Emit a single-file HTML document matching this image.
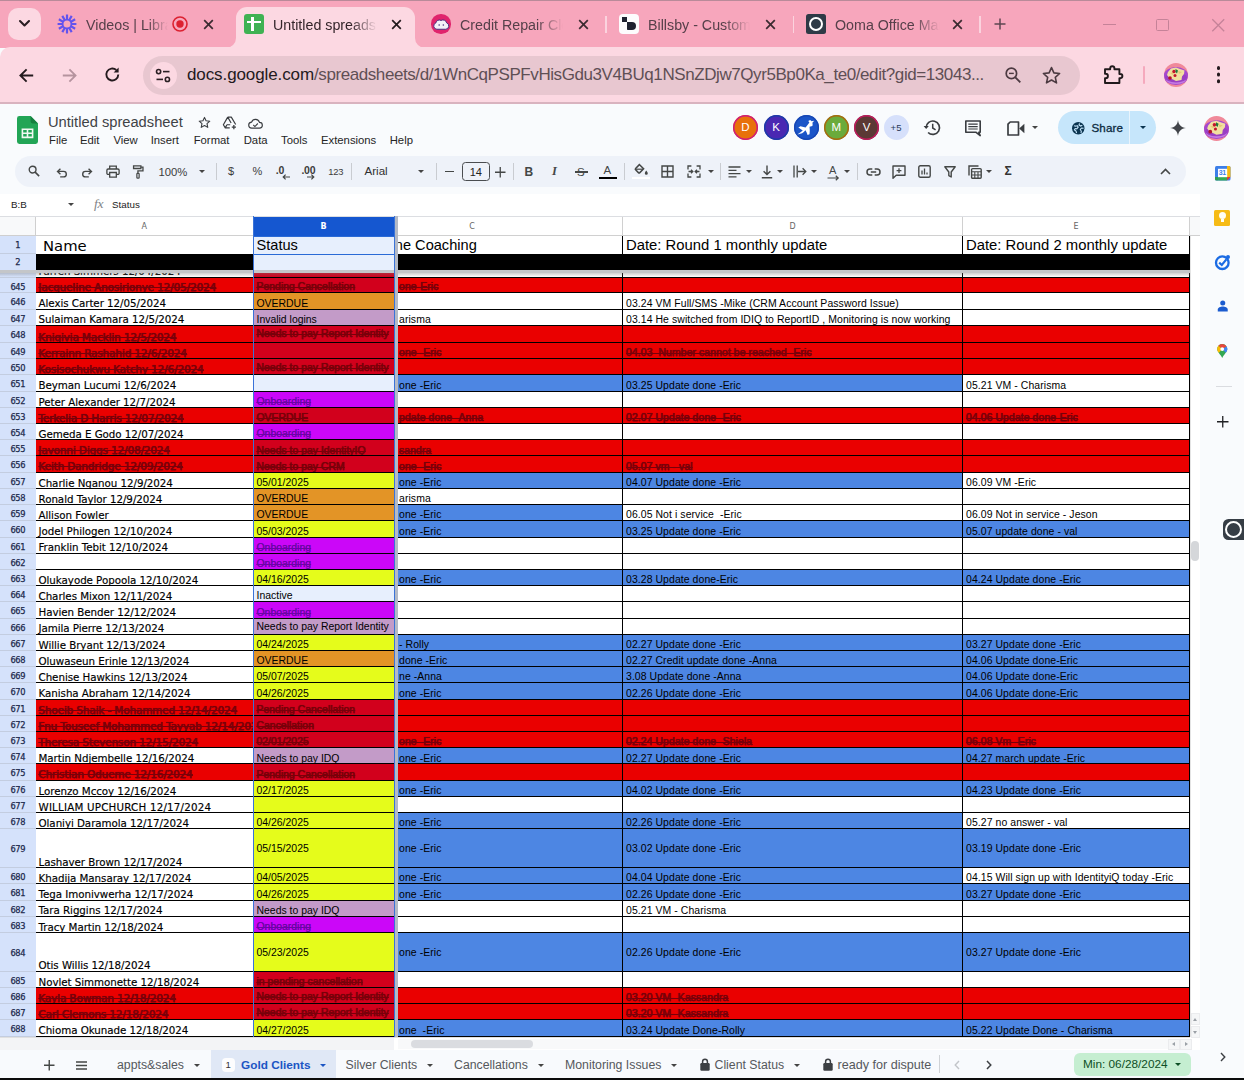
<!DOCTYPE html>
<html><head><meta charset="utf-8"><title>Untitled spreadsheet</title>
<style>
*{box-sizing:border-box;margin:0;padding:0}
html,body{width:1244px;height:1080px;overflow:hidden;background:#f9fbfd;font-family:"Liberation Sans",sans-serif;color:#1f1f1f}
.abs{position:absolute}
#tabstrip{position:absolute;left:0;top:0;width:1244px;height:48px;background:#f7a6bc}
#topline{position:absolute;left:0;top:0;width:1244px;height:1px;background:#b98a99}
#navbar{position:absolute;left:0;top:47px;width:1244px;height:56px;background:#fcd8e2;border-radius:10px 0 0 0}
#navline{position:absolute;left:0;top:102px;width:1244px;height:2px;background:#d9b3bf}
.tabtxt{position:absolute;top:14.5px;font-size:14.25px;color:#56404a;white-space:nowrap;overflow:hidden;height:20px;line-height:20px}
.fade{-webkit-mask-image:linear-gradient(90deg,#000 75%,transparent 100%);mask-image:linear-gradient(90deg,#000 75%,transparent 100%)}
.tsep{position:absolute;top:16px;width:1.5px;height:17px;background:#fbd3de}
svg{position:absolute;overflow:visible}
#pill{position:absolute;left:143px;top:55.5px;width:937px;height:39px;border-radius:20px;background:#e8c7d0}
#url{position:absolute;left:187px;top:64px;font-size:17px;line-height:22px;color:#5f4f55;white-space:nowrap;letter-spacing:-0.42px}
#url b{font-weight:normal;color:#231a1d;letter-spacing:-0.1px}
/* sheets header */
#title{position:absolute;left:48px;top:112px;font-size:14.7px;line-height:20px;color:#3f4246;white-space:nowrap}
.menu{position:absolute;top:133px;font-size:11.3px;line-height:14px;color:#252525;white-space:nowrap}
.av{position:absolute;top:115px;width:25px;height:25px;border-radius:50%;color:#fff;font-size:11.5px;line-height:25px;text-align:center}
#share{position:absolute;left:1058px;top:111px;width:98px;height:33px;border-radius:17px;background:#c6e6fb}
#toolbar{position:absolute;left:15px;top:155.5px;width:1171px;height:31.5px;border-radius:16px;background:#eef2f9}
.tbt{position:absolute;font-size:11px;line-height:14px;color:#3c3c3c;white-space:nowrap}
.tsp{position:absolute;top:163px;width:1px;height:17px;background:#c9ccd1}
.car{position:absolute;width:0;height:0;border-left:3.2px solid transparent;border-right:3.2px solid transparent;border-top:3.6px solid #444}
#fbar{position:absolute;left:0;top:194px;width:1200px;height:22px;background:#fff}
/* grid */
#grid{position:absolute;left:0;top:216px;width:1200px;height:834px;background:#fff;overflow:hidden}
#gridin{position:absolute;left:0;top:-216px;width:1200px;height:1080px}
.c{position:absolute;border-right:1px solid #000;border-bottom:1px solid #000;overflow:hidden;white-space:nowrap;font-size:10.45px;color:#000;display:flex;align-items:flex-end;padding:0 0 1px 3px}
.c span{display:block;line-height:12px}
.nm{font-family:"DejaVu Sans","Liberation Sans",sans-serif;font-size:10.3px;-webkit-text-stroke:.15px currentColor;letter-spacing:-0.05px;padding-left:2.5px;border-right:none}
.nm span{line-height:12px;position:relative;top:1.7px}
.st{border-right:none;padding-left:3px}
.ar span,.st span{position:relative;top:2.1px}
.ar{letter-spacing:.08px}
.rd{color:#78000a;text-shadow:0 0 .8px #78000a;-webkit-text-stroke:.25px #78000a}
.rd span{text-decoration:line-through;text-decoration-thickness:.6px;text-decoration-color:rgba(120,0,10,.65)}
.mg{color:#6b05a6;text-shadow:0 0 .6px #6b05a6}
.mg span{text-decoration:line-through;text-decoration-thickness:.6px;text-decoration-color:rgba(107,5,166,.65)}
.tp{align-items:flex-start}
.tp span{top:2.6px !important}
.cc{padding-left:1px}
.rh{position:absolute;left:0;width:36px;background:#d5e2fb;border-bottom:1px solid #c3cde0;text-align:center;font-size:8.3px;color:#1d2a4d;font-family:"DejaVu Sans","Liberation Sans",sans-serif;letter-spacing:-0.45px;-webkit-text-stroke:.25px #1d2a4d;padding-right:.5px}
.mid{align-items:center;padding-bottom:0}
.mid span{top:1px !important}
.ch{position:absolute;top:216px;height:20px;background:#fff;border-right:1px solid #d0d0d0;border-bottom:1px solid #d0d0d0;text-align:center;font-size:8px;line-height:22.5px;color:#666;font-family:"DejaVu Sans","Liberation Sans",sans-serif}
/* bottom */
#bbar{position:absolute;left:0;top:1050px;width:1200px;height:28px;background:#f8fafd}
.stab{position:absolute;top:1057.5px;font-size:12.3px;line-height:15px;color:#55585c;white-space:nowrap}
#side{position:absolute;left:1200px;top:104px;width:44px;height:974px;background:#f9fbfd}
#black{position:absolute;left:0;top:1078px;width:1244px;height:2px;background:#0b0b0b}
</style></head><body>
<div id="tabstrip"></div>
<div id="topline"></div>
<!-- tab search button -->
<div class="abs" style="left:8px;top:8px;width:33px;height:32px;border-radius:10px;background:#fcd8e2"></div>
<svg style="left:18px;top:19px" width="13" height="9" viewBox="0 0 13 9"><path d="M2 2 L6.5 6.5 L11 2" fill="none" stroke="#2a1d22" stroke-width="2.1" stroke-linecap="round" stroke-linejoin="round"/></svg>
<!-- tab1 -->
<svg style="left:57px;top:14px" width="20" height="20" viewBox="-10 -10 20 20"><path d="M0.00 -4.60L0.00 -9.40M2.30 -3.98L4.70 -8.14M3.98 -2.30L8.14 -4.70M4.60 -0.00L9.40 -0.00M3.98 2.30L8.14 4.70M2.30 3.98L4.70 8.14M0.00 4.60L0.00 9.40M-2.30 3.98L-4.70 8.14M-3.98 2.30L-8.14 4.70M-4.60 0.00L-9.40 0.00M-3.98 -2.30L-8.14 -4.70M-2.30 -3.98L-4.70 -8.14" stroke="#6253ee" stroke-width="2.2" fill="none"/><circle r="4.4" fill="none" stroke="#6253ee" stroke-width="1.8"/></svg>
<div class="tabtxt fade" style="left:86px;width:82px">Videos | Libra</div>
<svg style="left:171px;top:15px" width="18" height="18" viewBox="-9 -9 18 18"><circle r="7" fill="none" stroke="#dc2131" stroke-width="1.6"/><circle r="3.7" fill="#dc2131"/></svg>
<svg class="x" style="left:203px;top:19px" width="11" height="11" viewBox="0 0 11 11"><path d="M1.2 1.2L9.8 9.8M9.8 1.2L1.2 9.8" stroke="#3b2a30" stroke-width="1.7"/></svg>
<!-- active tab -->
<div class="abs" style="left:236px;top:7px;width:179px;height:41px;border-radius:11px 11px 0 0;background:#fcd8e2"></div>
<svg style="left:226px;top:38px" width="10" height="10" viewBox="0 0 10 10"><path d="M10 0V10H0A10 10 0 0 0 10 0Z" fill="#fcd8e2"/></svg>
<svg style="left:415px;top:38px" width="10" height="10" viewBox="0 0 10 10"><path d="M0 0V10H10A10 10 0 0 1 0 0Z" fill="#fcd8e2"/></svg>
<div class="abs" style="left:244px;top:14px;width:19.5px;height:19.5px;border-radius:3px;background:#3fb253"></div>
<div class="abs" style="left:251px;top:16.5px;width:2.6px;height:14.5px;background:#fff"></div>
<div class="abs" style="left:246.5px;top:20.5px;width:14.5px;height:2.6px;background:#fff"></div>
<div class="tabtxt fade" style="left:273px;width:104px;color:#33252a">Untitled spreadsheet</div>
<svg class="x" style="left:390.5px;top:19px" width="11" height="11" viewBox="0 0 11 11"><path d="M1.2 1.2L9.8 9.8M9.8 1.2L1.2 9.8" stroke="#231a1d" stroke-width="1.7"/></svg>
<!-- tab3 -->
<div class="abs" style="left:431px;top:14px;width:19.5px;height:19.5px;border-radius:50%;background:#e0246c"></div>
<svg style="left:432.6px;top:17.6px" width="16.5" height="12.2" viewBox="0 0 15 11"><path d="M3.5 10.2A3 3 0 0 1 2.6 4.4A3.2 3.2 0 0 1 7.3 2.2A3.4 3.4 0 0 1 12.4 4.4A3 3 0 0 1 11.5 10.2Z" fill="#f3f1f8" stroke="#4a2f7e" stroke-width=".9"/><circle cx="5.6" cy="6.3" r=".7" fill="#4a2f7e"/><circle cx="9.4" cy="6.3" r=".7" fill="#4a2f7e"/></svg>
<div class="tabtxt fade" style="left:460px;width:103px">Credit Repair Cloud</div>
<svg class="x" style="left:578px;top:19px" width="11" height="11" viewBox="0 0 11 11"><path d="M1.2 1.2L9.8 9.8M9.8 1.2L1.2 9.8" stroke="#3b2a30" stroke-width="1.7"/></svg>
<div class="tsep" style="left:605.3px"></div>
<!-- tab4 -->
<div class="abs" style="left:619px;top:14px;width:19.5px;height:19.5px;border-radius:4px;background:#fdfcfd"></div>
<div class="abs" style="left:622px;top:17px;width:4.5px;height:4.5px;background:#1f2230"></div>
<div class="abs" style="left:626.5px;top:21.5px;width:9px;height:8.5px;border-radius:0 5px 5px 1px;background:#1f2230"></div>
<div class="tabtxt fade" style="left:648px;width:102px">Billsby - Customer</div>
<svg class="x" style="left:765px;top:19px" width="11" height="11" viewBox="0 0 11 11"><path d="M1.2 1.2L9.8 9.8M9.8 1.2L1.2 9.8" stroke="#3b2a30" stroke-width="1.7"/></svg>
<div class="tsep" style="left:792.5px"></div>
<!-- tab5 -->
<div class="abs" style="left:806px;top:14px;width:19.5px;height:19.5px;border-radius:2.5px;background:#2e3a46"></div>
<div class="abs" style="left:808.7px;top:16.7px;width:14px;height:14px;border-radius:50%;border:2.1px solid #fff"></div>
<div class="tabtxt fade" style="left:835px;width:105px">Ooma Office Manager</div>
<svg class="x" style="left:952px;top:19px" width="11" height="11" viewBox="0 0 11 11"><path d="M1.2 1.2L9.8 9.8M9.8 1.2L1.2 9.8" stroke="#3b2a30" stroke-width="1.7"/></svg>
<div class="tsep" style="left:979.3px"></div>
<svg style="left:994px;top:18px" width="12" height="12" viewBox="0 0 12 12"><path d="M6 0.5V11.5M0.5 6H11.5" stroke="#5e4650" stroke-width="1.5"/></svg>
<!-- window controls -->
<div class="abs" style="left:1102.5px;top:24px;width:13px;height:1.3px;background:#c58298"></div>
<div class="abs" style="left:1156px;top:18.5px;width:12.5px;height:12.5px;border:1.3px solid #c58298;border-radius:1.5px"></div>
<svg style="left:1211.5px;top:18.5px" width="12.5" height="12.5" viewBox="0 0 12.5 12.5"><path d="M0.3 0.3L12.2 12.2M12.2 0.3L0.3 12.2" stroke="#c58298" stroke-width="1.3"/></svg>
<!-- navbar -->
<div id="navbar"></div>
<div id="navline"></div>
<svg style="left:19px;top:67.5px" width="15" height="15" viewBox="0 0 15 15"><path d="M14.2 7.5H1.6M7.6 1.3L1.4 7.5L7.6 13.7" fill="none" stroke="#241a1e" stroke-width="1.9"/></svg>
<svg style="left:62px;top:67.5px" width="15" height="15" viewBox="0 0 15 15"><path d="M0.8 7.5H13.4M7.4 1.3L13.6 7.5L7.4 13.7" fill="none" stroke="#b5939e" stroke-width="1.8"/></svg>
<svg style="left:104px;top:66px" width="17" height="17" viewBox="0 0 17 17"><path d="M14.3 8.6A6 6 0 1 1 12.3 4" fill="none" stroke="#241a1e" stroke-width="1.9"/><path d="M14.6 1.6V6.6H9.6Z" fill="#241a1e"/></svg>
<div id="pill"></div>
<div class="abs" style="left:149.5px;top:61.5px;width:27.5px;height:27.5px;border-radius:50%;background:#fcd8e2"></div>
<svg style="left:155px;top:67.5px" width="16" height="15" viewBox="0 0 16 15"><g fill="none" stroke="#2b2024" stroke-width="1.6"><circle cx="3.6" cy="3.6" r="2.1"/><path d="M8 3.6H14.5"/><circle cx="12.4" cy="11.4" r="2.1"/><path d="M1.5 11.4H8"/></g></svg>
<div id="url"><b>docs.google.com</b>/spreadsheets/d/1WnCqPSPFvHisGdu3V4BUq1NSnZDjw7Qyr5Bp0Ka_te0/edit?gid=13043...</div>
<svg style="left:1004px;top:66px" width="18" height="18" viewBox="0 0 18 18"><circle cx="7.4" cy="7.4" r="5.2" fill="none" stroke="#4c3a41" stroke-width="1.7"/><path d="M11.3 11.3L16.3 16.3" stroke="#4c3a41" stroke-width="1.9"/><path d="M5 7.4H9.8" stroke="#4c3a41" stroke-width="1.4"/></svg>
<svg style="left:1042px;top:65.5px" width="19" height="18" viewBox="0 0 19 18"><path d="M9.5 1.6L11.9 6.9L17.6 7.5L13.3 11.3L14.5 16.9L9.5 14L4.5 16.9L5.7 11.3L1.4 7.5L7.1 6.9Z" fill="none" stroke="#4c3a41" stroke-width="1.6" stroke-linejoin="round"/></svg>
<svg style="left:1103px;top:64px" width="21" height="21" viewBox="0 0 21 21"><path d="M2 5.2H7.2V4.3A2.1 2.1 0 0 1 11.4 4.3V5.2H16.4V10H17.3A2.1 2.1 0 0 1 17.3 14.2H16.4V19H2V14.3H2.6A2.3 2.3 0 0 0 2.6 9.7H2Z" fill="none" stroke="#211a1c" stroke-width="1.9" stroke-linejoin="round"/></svg>
<div class="abs" style="left:1142.5px;top:66px;width:2px;height:18px;background:#f5a9bd;border-radius:1px"></div>
<!-- avatar -->
<svg style="left:1164.2px;top:62.5px" width="24" height="24" viewBox="0 0 24 24"><defs><clipPath id="avc1164"><circle cx="12" cy="12" r="12"/></clipPath></defs><g clip-path="url(#avc1164)"><rect width="24" height="24" fill="#f0899a"/><ellipse cx="12" cy="13" rx="12.5" ry="9" fill="#a548cf"/><ellipse cx="12" cy="16.5" rx="10" ry="4.5" fill="#c57be2"/><ellipse cx="12" cy="14.5" rx="11" ry="5" fill="#9a3fc4"/><path d="M4 9L7 5.5L12 4.5L16 6L20.5 7.5L20 11L18 13.5L17.5 17L12 18L8 16L5 14.5L3 12Z" fill="#f1dfa0"/><path d="M6 10L10 9L9 12Z M14 8L18 9L15 11Z" fill="#e6c878"/><circle cx="10" cy="8.5" r="1.7" fill="#c4162d"/><circle cx="11" cy="12.5" r="1.5" fill="#c4162d"/><circle cx="6" cy="15" r="1.8" fill="#b3122a"/><path d="M11.5 6L14 7.5L13 10.5L11.5 9Z" fill="#1f7a3c"/></g></svg>
<div class="abs" style="left:1216.5px;top:66.3px;width:3.6px;height:3.6px;border-radius:50%;background:#241a1e;box-shadow:0 6.6px 0 #241a1e,0 13.2px 0 #241a1e"></div>

<div id="side"></div>
<!-- calendar -->
<svg style="left:1214.5px;top:166px" width="15.5" height="14.5" viewBox="0 0 15.500 14.5"><rect x="0" y="0" width="15.5" height="14.5" rx="1.5" fill="#3d7fe8"/><path d="M12 0H14A1.500 1.500 0 0 1 15.500 1.500V11H12Z" fill="#f5b912"/><path d="M0 11H3.500V14.500H1.500A1.500 1.500 0 0 1 0 13Z" fill="#2f9e4f"/><path d="M3.500 11H12V14.500H3.500Z" fill="#35a853"/><path d="M12 11H15.500L12 14.500Z" fill="#e13c30"/><rect x="3" y="2.8" width="9.2" height="8.4" fill="#fff"/></svg>
<div class="abs" style="left:1217.5px;top:169px;width:9.5px;text-align:center;font-size:7px;line-height:8px;color:#3d7fe8;font-weight:bold;letter-spacing:-.4px">31</div>
<!-- keep -->
<div class="abs" style="left:1214.3px;top:209.5px;width:16px;height:16px;border-radius:1.5px;background:#f6bb16"></div>
<div class="abs" style="left:1218.8px;top:212.3px;width:7px;height:7px;border-radius:50%;background:#fffdf4"></div>
<div class="abs" style="left:1220.5px;top:219px;width:3.6px;height:3px;background:#fffdf4"></div>
<!-- tasks -->
<svg style="left:1214px;top:253.5px" width="17" height="17" viewBox="0 0 17 17"><circle cx="8.3" cy="8.7" r="6.3" fill="none" stroke="#1b6be3" stroke-width="2.3"/><path d="M5.200 8.600L7.800 11L12.400 5.4" fill="none" stroke="#1b6be3" stroke-width="2.2"/><circle cx="14" cy="3" r="2" fill="#1b6be3"/></svg>
<!-- contacts -->
<svg style="left:1216.7px;top:299.5px" width="11.5" height="12.3" viewBox="0 0 15 16"><circle cx="7.5" cy="3.8" r="3.3" fill="#1c5ccf"/><path d="M1 15V12.500C1 9.800 4.500 8.600 7.500 8.600S14 9.800 14 12.500V15Z" fill="#1c5ccf"/></svg>
<!-- maps -->
<svg style="left:1217.3px;top:344px" width="10.5" height="14.5" viewBox="0 0 13 18"><path d="M6.500 0A6.300 6.300 0 0 1 12.800 6.300C12.800 10 9 12.500 6.500 17.500C4 12.500 .2 10 .2 6.300A6.300 6.300 0 0 1 6.500 0Z" fill="#34a853"/><path d="M6.500 0A6.300 6.300 0 0 1 12 3.200L6.500 6.300L1.600 2.300A6.300 6.300 0 0 1 6.500 0Z" fill="#e8453c"/><path d="M12 3.200A6.300 6.300 0 0 1 12.800 6.300C12.800 8 12 9.500 10.800 11L6.500 6.300Z" fill="#4285f4"/><path d="M1.600 2.300L6.500 6.300L2.300 11C1 9.500 .2 8 .2 6.300C.2 4.800 .7 3.400 1.600 2.300Z" fill="#fbbc04"/><circle cx="6.5" cy="6.3" r="2.3" fill="#fff"/></svg>
<div class="abs" style="left:1215.5px;top:386px;width:16px;height:1px;background:#dadce0"></div>
<svg style="left:1216.5px;top:416px" width="11.5" height="11.5" viewBox="0 0 11.500 11.5"><path d="M5.750 0V11.500M0 5.750H11.5" stroke="#202124" stroke-width="1.3"/></svg>
<!-- ooma floating -->
<div class="abs" style="left:1223px;top:518.5px;width:30px;height:21.5px;border-radius:5.5px;background:#363d45"></div>
<div class="abs" style="left:1225.2px;top:520.8px;width:17.2px;height:17.2px;border-radius:50%;border:2px solid #fff"></div>
<svg style="left:1219.5px;top:1052px" width="6" height="10" viewBox="0 0 6 10"><path d="M1 1L4.800 5L1 9" fill="none" stroke="#3c3f43" stroke-width="1.4"/></svg>

<!-- logo -->
<svg style="left:16.5px;top:115.5px" width="21" height="28" viewBox="0 0 21 28"><path d="M2.4 0H13.6L21 7.4V25.6A2.4 2.4 0 0 1 18.6 28H2.4A2.4 2.4 0 0 1 0 25.600V2.4A2.400 2.400 0 0 1 2.400 0Z" fill="#22a556"/><path d="M13.600 0L21 7.400H15.400A1.800 1.800 0 0 1 13.600 5.600Z" fill="#15803f"/><path d="M4.600 12.400H16.400V22.200H4.600ZM6.200 14V16.500H9.700V14ZM11.300 14V16.500H14.800V14ZM6.200 18.100V20.600H9.700V18.100ZM11.300 18.100V20.600H14.800V18.100Z" fill="#f1f9f3" fill-rule="evenodd"/></svg>
<div id="title">Untitled spreadsheet</div>
<svg style="left:197.8px;top:116.3px" width="13" height="13" viewBox="0 0 16 16"><path d="M8 1.700L9.900 5.900L14.500 6.400L11.100 9.500L12 14L8 11.700L4 14L4.900 9.500L1.500 6.400L6.100 5.900Z" fill="none" stroke="#3a3d41" stroke-width="1.350" stroke-linejoin="round"/></svg>
<svg style="left:221.5px;top:116px" width="15.5" height="13.7" viewBox="0 0 17 15"><path d="M6.300 1.200H10.200L15 9.300M6.300 1.200L1.500 9.600L3.600 13H8.500M6.300 1.200L10 7.700M5.400 9.600L3.600 13M5.400 9.600H9" fill="none" stroke="#3a3d41" stroke-width="1.300" stroke-linejoin="round"/><path d="M13 9.800V14.400M10.700 12.100H15.300" stroke="#3a3d41" stroke-width="1.400"/></svg>
<svg style="left:247.5px;top:117.5px" width="15.2" height="11" viewBox="0 0 18 13"><path d="M4.600 12A3.600 3.600 0 0 1 4.300 4.800A4.900 4.900 0 0 1 13.600 5.200A3.400 3.400 0 0 1 13.600 12Z" fill="none" stroke="#3a3d41" stroke-width="1.350"/><path d="M6.300 8.300L8.200 10.100L11.600 6.500" fill="none" stroke="#3a3d41" stroke-width="1.300"/></svg>
<div class="menu" style="left:49px">File</div><div class="menu" style="left:80px">Edit</div><div class="menu" style="left:113.5px">View</div><div class="menu" style="left:150.7px">Insert</div><div class="menu" style="left:193.7px">Format</div><div class="menu" style="left:243.7px">Data</div><div class="menu" style="left:281px">Tools</div><div class="menu" style="left:321px">Extensions</div><div class="menu" style="left:389.7px">Help</div>
<!-- avatars -->
<div class="av" style="left:732.8px;background:#e8710a;box-shadow:inset 0 0 0 1.5px #cf1a7c">D</div>
<div class="av" style="left:763.5px;background:#4a28b2;box-shadow:inset 0 0 0 1.5px #1c3ca8">K</div>
<div class="av" style="left:793.5px;background:#1b55c8;box-shadow:inset 0 0 0 1.5px #1747b4"></div>
<svg style="left:796.3px;top:117.8px" width="19.5" height="19.5" viewBox="0 0 15 15"><path d="M1 12.600C2.600 11.800 4 10.800 5.200 9.700L1.800 7.400L3.400 6.300L7.400 7.300C8.400 5.800 9.400 4.600 10.300 3.400L9.400 2.300L10.900 1.500L12 2.500L14 2.200L12.600 3.700C12.900 4.500 12.900 5.300 12.600 6.100L10.400 6.700C10.700 8.700 10.700 10.600 10.400 12.500L8.900 13C8.500 11.700 8 10.500 7.300 9.400C6.500 10.300 5.600 11.100 4.700 11.700Z" fill="#fff"/></svg>
<div class="av" style="left:823.7px;background:#6aab3b;box-shadow:inset 0 0 0 1.5px #a9690f">M</div>
<div class="av" style="left:854.1px;background:#5b3935;box-shadow:inset 0 0 0 1.5px #c01a5d">V</div>
<div class="av" style="left:883.5px;background:#d6e0fb;color:#2a3a58;font-size:9.5px">+5</div>
<!-- history -->
<svg style="left:923px;top:118px" width="19" height="19" viewBox="0 0 19 19"><path d="M3.100 9.700A6.700 6.700 0 1 1 5.100 14.500" fill="none" stroke="#3a3d41" stroke-width="1.700"/><path d="M0.600 7.900H5.800L3.200 11Z" fill="#3a3d41"/><path d="M9.700 5.800V10L12.600 11.800" fill="none" stroke="#3a3d41" stroke-width="1.500"/></svg>
<!-- comment -->
<svg style="left:964px;top:119.5px" width="18" height="17" viewBox="0 0 18 17"><path d="M1.800 1H16.200V12.200H14.800L16.200 15.600L11.800 12.200H1.800Z" fill="none" stroke="#3a3d41" stroke-width="1.600" stroke-linejoin="round"/><path d="M4.300 4.200H13.700M4.300 6.600H13.700M4.300 9H13.700" stroke="#3a3d41" stroke-width="1.200"/></svg>
<!-- video -->
<svg style="left:1007px;top:120.5px" width="18" height="15" viewBox="0 0 18 15"><path d="M3.200 1H11.500V14H1V3.200Z" fill="none" stroke="#3a3d41" stroke-width="1.700" stroke-linejoin="round"/><path d="M12.200 7.500L17.400 2.800V12.200Z" fill="#3a3d41"/></svg>
<div class="car" style="left:1032px;top:125.5px"></div>
<!-- share -->
<div id="share"></div>
<div class="abs" style="left:1129px;top:111px;width:1px;height:33px;background:#e8f4fd"></div>
<svg style="left:1071.5px;top:121.5px" width="12.500" height="12.500" viewBox="0 0 12.500 12.500"><circle cx="6.250" cy="6.250" r="6.200" fill="#0b3450"/><path d="M2 3.800C3 4.200 4.200 4.300 5.300 3.800L6.200 5.200L4.800 6.800L3.200 6.500L2.400 7.800L4 9L4.600 11M7.500 1.400L7 3L8.600 4L10.300 3.200M11.600 6.200L9.600 6L8.300 7.400L9.300 9.300L9 11" fill="none" stroke="#c6e6fb" stroke-width="1.100"/></svg>
<div class="abs" style="left:1091.5px;top:120px;font-size:11.6px;line-height:15px;color:#0b2a40;-webkit-text-stroke:.3px #0b2a40;letter-spacing:.1px">Share</div>
<div class="car" style="left:1139.5px;top:126px;border-top-color:#0b3450"></div>
<!-- gemini -->
<svg style="left:1169.5px;top:120px" width="16" height="16" viewBox="0 0 16 16"><path d="M8 0C8.500 4.800 11.200 7.500 16 8C11.200 8.500 8.500 11.200 8 16C7.500 11.200 4.800 8.500 0 8C4.800 7.500 7.500 4.800 8 0Z" fill="#42454a"/></svg>
<!-- avatar -->
<svg style="left:1203.7px;top:115.5px" width="25" height="25" viewBox="0 0 24 24"><defs><clipPath id="avc1203"><circle cx="12" cy="12" r="12"/></clipPath></defs><g clip-path="url(#avc1203)"><rect width="24" height="24" fill="#f0899a"/><ellipse cx="12" cy="13" rx="12.5" ry="9" fill="#a548cf"/><ellipse cx="12" cy="16.5" rx="10" ry="4.5" fill="#c57be2"/><ellipse cx="12" cy="14.5" rx="11" ry="5" fill="#9a3fc4"/><path d="M4 9L7 5.5L12 4.5L16 6L20.5 7.5L20 11L18 13.5L17.5 17L12 18L8 16L5 14.5L3 12Z" fill="#f1dfa0"/><path d="M6 10L10 9L9 12Z M14 8L18 9L15 11Z" fill="#e6c878"/><circle cx="10" cy="8.5" r="1.7" fill="#c4162d"/><circle cx="11" cy="12.5" r="1.5" fill="#c4162d"/><circle cx="6" cy="15" r="1.8" fill="#b3122a"/><path d="M11.5 6L14 7.5L13 10.5L11.5 9Z" fill="#1f7a3c"/></g></svg>
<!-- toolbar -->
<div id="toolbar"></div>
<svg style="left:28px;top:165.3px" width="12.2" height="12.2" viewBox="0 0 14 14"><circle cx="5.300" cy="5.300" r="3.900" fill="none" stroke="#444746" stroke-width="1.600"/><path d="M8.200 8.200L12.800 12.800" stroke="#444746" stroke-width="1.800"/></svg>
<svg style="left:55.5px;top:166.5px" width="12" height="11" viewBox="0 0 13 12"><path d="M2.200 4.800H8.200A3 3 0 0 1 8.200 10.800H4.500" fill="none" stroke="#444746" stroke-width="1.500"/><path d="M4.800 1.800L1.600 4.800L4.800 7.800" fill="none" stroke="#444746" stroke-width="1.500"/></svg>
<svg style="left:80.8px;top:166.5px" width="12" height="11" viewBox="0 0 13 12"><path d="M10.800 4.800H4.800A3 3 0 0 0 4.800 10.800H8.500" fill="none" stroke="#444746" stroke-width="1.500"/><path d="M8.200 1.800L11.400 4.800L8.200 7.800" fill="none" stroke="#444746" stroke-width="1.500"/></svg>
<svg style="left:105.5px;top:165.3px" width="14" height="13.1" viewBox="0 0 16 15"><path d="M4.200 4.600V1.200H11.800V4.600M4.200 10.800H2.400A1.400 1.400 0 0 1 1 9.400V6A1.400 1.400 0 0 1 2.400 4.600H13.600A1.400 1.400 0 0 1 15 6V9.400A1.400 1.400 0 0 1 13.600 10.800H11.800M4.200 8.600H11.800V13.800H4.200Z" fill="none" stroke="#444746" stroke-width="1.500"/></svg>
<svg style="left:132.3px;top:164.8px" width="12.2" height="14" viewBox="0 0 14 16"><path d="M1.800 1H10.200V4H1.800ZM10.200 2.500H12.600V6.800H6.800V9.600" fill="none" stroke="#444746" stroke-width="1.500"/><rect x="5.600" y="9.600" width="2.600" height="5.400" rx=".8" fill="none" stroke="#444746" stroke-width="1.400"/></svg>
<div class="tbt" style="left:158.5px;top:165px;font-size:11.3px">100%</div>
<div class="car" style="left:198.8px;top:170px"></div>
<div class="tsp" style="left:215.5px"></div>
<div class="tbt" style="left:228px;top:164px;font-size:11px">$</div>
<div class="tbt" style="left:252.5px;top:164px;font-size:11px">%</div>
<div class="tbt" style="left:275.8px;top:162.5px;font-size:10.5px;font-weight:bold;letter-spacing:-.3px">.0</div>
<svg style="left:281.5px;top:174px" width="8" height="6" viewBox="0 0 8 6"><path d="M8 3H1.500M3.600 .6L1.200 3L3.600 5.400" fill="none" stroke="#444746" stroke-width="1.200"/></svg>
<div class="tbt" style="left:301.5px;top:162.5px;font-size:10.5px;font-weight:bold;letter-spacing:-.3px">.00</div>
<svg style="left:307px;top:174px" width="8" height="6" viewBox="0 0 8 6"><path d="M0 3H6.500M4.400 .6L6.800 3L4.400 5.400" fill="none" stroke="#444746" stroke-width="1.200"/></svg>
<div class="tbt" style="left:328.3px;top:165px;font-size:9.4px;letter-spacing:-.2px">123</div>
<div class="tsp" style="left:351px"></div>
<div class="tbt" style="left:364.5px;top:164px;font-size:11.6px;color:#303030">Arial</div>
<div class="car" style="left:417.5px;top:170px"></div>
<div class="tsp" style="left:436px"></div>
<div class="abs" style="left:444.5px;top:171px;width:9.5px;height:1.3px;background:#444746"></div>
<div class="abs" style="left:462px;top:162px;width:27.5px;height:19px;border:1px solid #4a4d50;border-radius:3.5px"></div>
<div class="tbt" style="left:462px;top:165px;width:27.5px;text-align:center;font-size:11px;color:#222">14</div>
<svg style="left:495px;top:166.5px" width="10.500" height="10.500" viewBox="0 0 10.500 10.500"><path d="M5.250 0V10.500M0 5.250H10.500" stroke="#444746" stroke-width="1.3"/></svg>
<div class="tsp" style="left:513px"></div>
<div class="tbt" style="left:524.5px;top:164.5px;font-size:12px;font-weight:bold;color:#444746">B</div>
<div class="tbt" style="left:552px;top:164px;font-size:12.5px;font-style:italic;font-weight:bold;color:#444746;font-family:'Liberation Serif',serif">I</div>
<div class="tbt" style="left:577px;top:164.5px;font-size:11.5px;color:#444746">S</div>
<div class="abs" style="left:574.5px;top:171.3px;width:13px;height:1.3px;background:#444746"></div>
<div class="tbt" style="left:603.5px;top:162.5px;font-size:11.5px;color:#444746">A</div>
<div class="abs" style="left:599px;top:176.5px;width:18px;height:2.5px;background:#000"></div>
<div class="tsp" style="left:624px"></div>
<svg style="left:633.5px;top:162.5px" width="15" height="13" viewBox="0 0 15 13"><path d="M4.800 1L9.600 5.800L5.800 9.600A1 1 0 0 1 4.400 9.600L1.600 6.800A1 1 0 0 1 1.600 5.400L5.600 1.400" fill="none" stroke="#444746" stroke-width="1.500"/><path d="M2 6.200H9" stroke="#444746" stroke-width="1.200"/><path d="M12.200 7.400C13.400 9 13.800 9.700 13.800 10.300A1.500 1.500 0 0 1 10.800 10.300C10.800 9.700 11.200 9 12.200 7.400Z" fill="#444746"/></svg>
<div class="abs" style="left:632px;top:176.5px;width:17.5px;height:2.5px;background:#fff"></div>
<svg style="left:660.5px;top:165px" width="13" height="13" viewBox="0 0 13 13"><path d="M1 1H12V12H1ZM6.500 1V12M1 6.500H12" fill="none" stroke="#444746" stroke-width="1.400"/></svg>
<svg style="left:687px;top:165px" width="14" height="13" viewBox="0 0 14 13"><path d="M4.400 1H1V4.400M9.600 1H13V4.400M4.400 12H1V8.600M9.600 12H13V8.600M1.500 6.500H5.500M12.500 6.500H8.500M4 4.800L5.800 6.500L4 8.200M10 4.800L8.200 6.500L10 8.200" fill="none" stroke="#444746" stroke-width="1.300"/></svg>
<div class="car" style="left:708.2px;top:170px"></div>
<div class="tsp" style="left:720px"></div>
<svg style="left:727.5px;top:165.5px" width="13" height="12" viewBox="0 0 13 12"><path d="M0.500 1H12.500M0.500 4.300H8.500M0.500 7.600H12.500M0.500 10.900H8.500" stroke="#444746" stroke-width="1.300"/></svg>
<div class="car" style="left:745.6px;top:170px"></div>
<svg style="left:761px;top:164.5px" width="12" height="14" viewBox="0 0 12 14"><path d="M6 0.500V9.500M2.600 6.200L6 9.600L9.400 6.200M0.800 12.700H11.200" fill="none" stroke="#444746" stroke-width="1.400"/></svg>
<div class="car" style="left:777.4px;top:170px"></div>
<svg style="left:792.5px;top:165px" width="14" height="13" viewBox="0 0 14 13"><path d="M1 0.500V12.500M4.200 0.500V12.500M5 6.500H12.500M9.600 3.300L12.800 6.500L9.600 9.700" fill="none" stroke="#444746" stroke-width="1.300"/></svg>
<div class="car" style="left:811.2px;top:170px"></div>
<div class="tbt" style="left:829px;top:163px;font-size:11px;color:#444746">A</div>
<svg style="left:827px;top:174.5px" width="13" height="6" viewBox="0 0 13 6"><path d="M0.500 3H11M8.800 .8L11.200 3L8.800 5.200" fill="none" stroke="#444746" stroke-width="1.200"/></svg>
<div class="car" style="left:843.8px;top:170px"></div>
<div class="tsp" style="left:856.5px"></div>
<svg style="left:865.5px;top:167.5px" width="15" height="8" viewBox="0 0 15 8"><path d="M6.300 1H4A3 3 0 0 0 4 7H6.300M8.700 1H11A3 3 0 0 1 11 7H8.700M4.800 4H10.200" fill="none" stroke="#444746" stroke-width="1.500"/></svg>
<svg style="left:892px;top:164.5px" width="14" height="14" viewBox="0 0 14 14"><path d="M1 1H13V10.200H4.200L1 13.200Z" fill="none" stroke="#444746" stroke-width="1.400" stroke-linejoin="round"/><path d="M7 3.200V8M4.600 5.600H9.400" stroke="#444746" stroke-width="1.300"/></svg>
<svg style="left:918px;top:165px" width="13" height="13" viewBox="0 0 13 13"><rect x=".8" y=".8" width="11.400" height="11.400" rx="1.500" fill="none" stroke="#444746" stroke-width="1.400"/><path d="M4 9.500V5.500M6.500 9.500V3.500M9 9.500V7.500" stroke="#444746" stroke-width="1.300"/></svg>
<svg style="left:944px;top:165.5px" width="12" height="12" viewBox="0 0 12 12"><path d="M0.800 0.800H11.200L7.200 6V11L4.800 9.600V6Z" fill="none" stroke="#444746" stroke-width="1.400" stroke-linejoin="round"/></svg>
<svg style="left:968px;top:164.5px" width="14" height="14" viewBox="0 0 14 14"><path d="M1 10.500V1H10.500" fill="none" stroke="#444746" stroke-width="1.400"/><rect x="3.600" y="3.600" width="9.600" height="9.600" rx="1" fill="none" stroke="#444746" stroke-width="1.400"/><path d="M3.600 6.800H13.200M6.800 6.800V13.200M10 6.800V13.200M3.600 10H13.200" stroke="#444746" stroke-width="1.100"/></svg>
<div class="car" style="left:985.5px;top:170px"></div>
<div class="tbt" style="left:1004.5px;top:164px;font-size:12px;font-weight:bold;color:#333">Σ</div>
<svg style="left:1159.5px;top:168px" width="11" height="7" viewBox="0 0 11 7"><path d="M1 6L5.500 1.500L10 6" fill="none" stroke="#444746" stroke-width="1.600"/></svg>
<!-- formula bar -->
<div id="fbar"></div>
<div class="tbt" style="left:11px;top:197.5px;font-size:9.8px;color:#222">B:B</div>
<div class="car" style="left:68px;top:203px;border-left-width:3px;border-right-width:3px;border-top-width:3.4px"></div>
<div class="tbt" style="left:94px;top:196.5px;font-size:13.5px;font-style:italic;color:#808387;font-family:'Liberation Serif',serif;letter-spacing:-.3px">fx</div>
<div class="tbt" style="left:112px;top:197.5px;font-size:9.8px;color:#222">Status</div>

<div id="grid"><div id="gridin">
<div class="rh" style="top:270px;height:7.60px"></div><div class="c nm p644" style="left:36.00px;top:270.00px;width:217.50px;height:7.60px;background:#ffffff;"><span>Farren Simmers 12/04/2024</span></div><div class="c " style="left:253.50px;top:270.00px;width:141.00px;height:7.60px;background:#d2001c;"></div><div class="c " style="left:398.00px;top:270.00px;width:225.00px;height:7.60px;background:#ffffff;"></div><div class="c " style="left:623.00px;top:270.00px;width:340.00px;height:7.60px;background:#ffffff;"></div><div class="c " style="left:963.00px;top:270.00px;width:227.00px;height:7.60px;background:#ffffff;"></div><div class="rh" style="top:277.60px;height:15.80px;line-height:18.00px">645</div><div class="c nm rd" style="left:36.00px;top:277.60px;width:217.50px;height:15.80px;background:#ea0000;"><span>Jacqueline Anosirionye 12/05/2024</span></div><div class="c st rd" style="left:253.50px;top:277.60px;width:141.00px;height:15.80px;background:#d2001c;"><span>Pending Cancellation</span></div><div class="c ar rd cc" style="left:398.00px;top:277.60px;width:225.00px;height:15.80px;background:#ea0000;"><span>one-Eric</span></div><div class="c ar rd" style="left:623.00px;top:277.60px;width:340.00px;height:15.80px;background:#ea0000;"></div><div class="c ar rd" style="left:963.00px;top:277.60px;width:227.00px;height:15.80px;background:#ea0000;"></div><div class="rh" style="top:293.40px;height:16.40px;line-height:18.60px">646</div><div class="c nm" style="left:36.00px;top:293.40px;width:217.50px;height:16.40px;background:#ffffff;"><span>Alexis Carter 12/05/2024</span></div><div class="c st" style="left:253.50px;top:293.40px;width:141.00px;height:16.40px;background:#e39426;"><span>OVERDUE</span></div><div class="c ar cc" style="left:398.00px;top:293.40px;width:225.00px;height:16.40px;background:#ffffff;"></div><div class="c ar" style="left:623.00px;top:293.40px;width:340.00px;height:16.40px;background:#ffffff;"><span>03.24 VM Full/SMS -Mike (CRM Account Password Issue)</span></div><div class="c ar" style="left:963.00px;top:293.40px;width:227.00px;height:16.40px;background:#ffffff;"></div><div class="rh" style="top:309.80px;height:16.00px;line-height:18.20px">647</div><div class="c nm" style="left:36.00px;top:309.80px;width:217.50px;height:16.00px;background:#ffffff;"><span>Sulaiman Kamara 12/5/2024</span></div><div class="c st" style="left:253.50px;top:309.80px;width:141.00px;height:16.00px;background:#c39bc8;"><span>Invalid logins</span></div><div class="c ar cc" style="left:398.00px;top:309.80px;width:225.00px;height:16.00px;background:#ffffff;"><span>arisma</span></div><div class="c ar" style="left:623.00px;top:309.80px;width:340.00px;height:16.00px;background:#ffffff;"><span>03.14 He switched from IDIQ to ReportID , Monitoring is now working</span></div><div class="c ar" style="left:963.00px;top:309.80px;width:227.00px;height:16.00px;background:#ffffff;"></div><div class="rh" style="top:325.80px;height:17.20px;line-height:19.40px">648</div><div class="c nm rd" style="left:36.00px;top:325.80px;width:217.50px;height:17.20px;background:#ea0000;"><span>Kniqivia Macklin 12/5/2024</span></div><div class="c st rd tp" style="left:253.50px;top:325.80px;width:141.00px;height:17.20px;background:#d2001c;"><span>Needs to pay Report Identity</span></div><div class="c ar rd cc" style="left:398.00px;top:325.80px;width:225.00px;height:17.20px;background:#ea0000;"></div><div class="c ar rd" style="left:623.00px;top:325.80px;width:340.00px;height:17.20px;background:#ea0000;"></div><div class="c ar rd" style="left:963.00px;top:325.80px;width:227.00px;height:17.20px;background:#ea0000;"></div><div class="rh" style="top:343.00px;height:16.21px;line-height:18.41px">649</div><div class="c nm rd" style="left:36.00px;top:343.00px;width:217.50px;height:16.21px;background:#ea0000;"><span>Kerrainn Rashahid 12/6/2024</span></div><div class="c st rd" style="left:253.50px;top:343.00px;width:141.00px;height:16.21px;background:#d2001c;"></div><div class="c ar rd cc" style="left:398.00px;top:343.00px;width:225.00px;height:16.21px;background:#ea0000;"><span>one -Eric</span></div><div class="c ar rd" style="left:623.00px;top:343.00px;width:340.00px;height:16.21px;background:#ea0000;"><span>04.03 &nbsp;Number cannot be reached -Eric</span></div><div class="c ar rd" style="left:963.00px;top:343.00px;width:227.00px;height:16.21px;background:#ea0000;"></div><div class="rh" style="top:359.21px;height:16.21px;line-height:18.41px">650</div><div class="c nm rd" style="left:36.00px;top:359.21px;width:217.50px;height:16.21px;background:#ea0000;"><span>Kosisochukwu Katchy 12/6/2024</span></div><div class="c st rd tp" style="left:253.50px;top:359.21px;width:141.00px;height:16.21px;background:#d2001c;"><span>Needs to pay Report Identity</span></div><div class="c ar rd cc" style="left:398.00px;top:359.21px;width:225.00px;height:16.21px;background:#ea0000;"></div><div class="c ar rd" style="left:623.00px;top:359.21px;width:340.00px;height:16.21px;background:#ea0000;"></div><div class="c ar rd" style="left:963.00px;top:359.21px;width:227.00px;height:16.21px;background:#ea0000;"></div><div class="rh" style="top:375.42px;height:16.21px;line-height:18.41px">651</div><div class="c nm" style="left:36.00px;top:375.42px;width:217.50px;height:16.21px;background:#ffffff;"><span>Beyman Lucumi 12/6/2024</span></div><div class="c st" style="left:253.50px;top:375.42px;width:141.00px;height:16.21px;background:#e7effd;"></div><div class="c ar cc" style="left:398.00px;top:375.42px;width:225.00px;height:16.21px;background:#4d86e3;"><span>one -Eric</span></div><div class="c ar" style="left:623.00px;top:375.42px;width:340.00px;height:16.21px;background:#4d86e3;"><span>03.25 Update done -Eric</span></div><div class="c ar" style="left:963.00px;top:375.42px;width:227.00px;height:16.21px;background:#ffffff;"><span>05.21 VM - Charisma</span></div><div class="rh" style="top:391.63px;height:16.21px;line-height:18.41px">652</div><div class="c nm" style="left:36.00px;top:391.63px;width:217.50px;height:16.21px;background:#ffffff;"><span>Peter Alexander 12/7/2024</span></div><div class="c st mg" style="left:253.50px;top:391.63px;width:141.00px;height:16.21px;background:#cb07f8;"><span>Onboarding</span></div><div class="c ar cc" style="left:398.00px;top:391.63px;width:225.00px;height:16.21px;background:#ffffff;"></div><div class="c ar" style="left:623.00px;top:391.63px;width:340.00px;height:16.21px;background:#ffffff;"></div><div class="c ar" style="left:963.00px;top:391.63px;width:227.00px;height:16.21px;background:#ffffff;"></div><div class="rh" style="top:407.84px;height:16.21px;line-height:18.41px">653</div><div class="c nm rd" style="left:36.00px;top:407.84px;width:217.50px;height:16.21px;background:#ea0000;"><span>Terkelia D Harris 12/07/2024</span></div><div class="c st rd" style="left:253.50px;top:407.84px;width:141.00px;height:16.21px;background:#d2001c;"><span>OVERDUE</span></div><div class="c ar rd cc" style="left:398.00px;top:407.84px;width:225.00px;height:16.21px;background:#ea0000;"><span>pdate done -Anna</span></div><div class="c ar rd" style="left:623.00px;top:407.84px;width:340.00px;height:16.21px;background:#ea0000;"><span>02.07 Update done -Eric</span></div><div class="c ar rd" style="left:963.00px;top:407.84px;width:227.00px;height:16.21px;background:#ea0000;"><span>04.06 Update done-Eric</span></div><div class="rh" style="top:424.05px;height:16.21px;line-height:18.41px">654</div><div class="c nm" style="left:36.00px;top:424.05px;width:217.50px;height:16.21px;background:#ffffff;"><span>Gemeda E Godo 12/07/2024</span></div><div class="c st mg" style="left:253.50px;top:424.05px;width:141.00px;height:16.21px;background:#cb07f8;"><span>Onboarding</span></div><div class="c ar cc" style="left:398.00px;top:424.05px;width:225.00px;height:16.21px;background:#ffffff;"></div><div class="c ar" style="left:623.00px;top:424.05px;width:340.00px;height:16.21px;background:#ffffff;"></div><div class="c ar" style="left:963.00px;top:424.05px;width:227.00px;height:16.21px;background:#ffffff;"></div><div class="rh" style="top:440.26px;height:16.21px;line-height:18.41px">655</div><div class="c nm rd" style="left:36.00px;top:440.26px;width:217.50px;height:16.21px;background:#ea0000;"><span>Javonni Diggs 12/08/2024</span></div><div class="c st rd" style="left:253.50px;top:440.26px;width:141.00px;height:16.21px;background:#d2001c;"><span>Needs to pay IdentityIQ</span></div><div class="c ar rd cc" style="left:398.00px;top:440.26px;width:225.00px;height:16.21px;background:#ea0000;"><span>sandra</span></div><div class="c ar rd" style="left:623.00px;top:440.26px;width:340.00px;height:16.21px;background:#ea0000;"></div><div class="c ar rd" style="left:963.00px;top:440.26px;width:227.00px;height:16.21px;background:#ea0000;"></div><div class="rh" style="top:456.47px;height:16.21px;line-height:18.41px">656</div><div class="c nm rd" style="left:36.00px;top:456.47px;width:217.50px;height:16.21px;background:#ea0000;"><span>Keith Dandridge 12/09/2024</span></div><div class="c st rd" style="left:253.50px;top:456.47px;width:141.00px;height:16.21px;background:#d2001c;"><span>Needs to pay CRM</span></div><div class="c ar rd cc" style="left:398.00px;top:456.47px;width:225.00px;height:16.21px;background:#ea0000;"><span>one -Eric</span></div><div class="c ar rd" style="left:623.00px;top:456.47px;width:340.00px;height:16.21px;background:#ea0000;"><span>05.07 vm - val</span></div><div class="c ar rd" style="left:963.00px;top:456.47px;width:227.00px;height:16.21px;background:#ea0000;"></div><div class="rh" style="top:472.68px;height:16.21px;line-height:18.41px">657</div><div class="c nm" style="left:36.00px;top:472.68px;width:217.50px;height:16.21px;background:#ffffff;"><span>Charlie Nganou 12/9/2024</span></div><div class="c st" style="left:253.50px;top:472.68px;width:141.00px;height:16.21px;background:#e5fc1b;"><span>05/01/2025</span></div><div class="c ar cc" style="left:398.00px;top:472.68px;width:225.00px;height:16.21px;background:#4d86e3;"><span>one -Eric</span></div><div class="c ar" style="left:623.00px;top:472.68px;width:340.00px;height:16.21px;background:#4d86e3;"><span>04.07 Update done -Eric</span></div><div class="c ar" style="left:963.00px;top:472.68px;width:227.00px;height:16.21px;background:#ffffff;"><span>06.09 VM -Eric</span></div><div class="rh" style="top:488.89px;height:16.21px;line-height:18.41px">658</div><div class="c nm" style="left:36.00px;top:488.89px;width:217.50px;height:16.21px;background:#ffffff;"><span>Ronald Taylor 12/9/2024</span></div><div class="c st" style="left:253.50px;top:488.89px;width:141.00px;height:16.21px;background:#e39426;"><span>OVERDUE</span></div><div class="c ar cc" style="left:398.00px;top:488.89px;width:225.00px;height:16.21px;background:#ffffff;"><span>arisma</span></div><div class="c ar" style="left:623.00px;top:488.89px;width:340.00px;height:16.21px;background:#ffffff;"></div><div class="c ar" style="left:963.00px;top:488.89px;width:227.00px;height:16.21px;background:#ffffff;"></div><div class="rh" style="top:505.10px;height:16.21px;line-height:18.41px">659</div><div class="c nm" style="left:36.00px;top:505.10px;width:217.50px;height:16.21px;background:#ffffff;"><span>Allison Fowler</span></div><div class="c st" style="left:253.50px;top:505.10px;width:141.00px;height:16.21px;background:#e39426;"><span>OVERDUE</span></div><div class="c ar cc" style="left:398.00px;top:505.10px;width:225.00px;height:16.21px;background:#4d86e3;"><span>one -Eric</span></div><div class="c ar" style="left:623.00px;top:505.10px;width:340.00px;height:16.21px;background:#ffffff;"><span>06.05 Not i service &nbsp;-Eric</span></div><div class="c ar" style="left:963.00px;top:505.10px;width:227.00px;height:16.21px;background:#ffffff;"><span>06.09 Not in service - Jeson</span></div><div class="rh" style="top:521.31px;height:16.21px;line-height:18.41px">660</div><div class="c nm" style="left:36.00px;top:521.31px;width:217.50px;height:16.21px;background:#ffffff;"><span>Jodel Philogen 12/10/2024</span></div><div class="c st" style="left:253.50px;top:521.31px;width:141.00px;height:16.21px;background:#e5fc1b;"><span>05/03/2025</span></div><div class="c ar cc" style="left:398.00px;top:521.31px;width:225.00px;height:16.21px;background:#4d86e3;"><span>one -Eric</span></div><div class="c ar" style="left:623.00px;top:521.31px;width:340.00px;height:16.21px;background:#4d86e3;"><span>03.25 Update done -Eric</span></div><div class="c ar" style="left:963.00px;top:521.31px;width:227.00px;height:16.21px;background:#4d86e3;"><span>05.07 update done - val</span></div><div class="rh" style="top:537.52px;height:16.21px;line-height:18.41px">661</div><div class="c nm" style="left:36.00px;top:537.52px;width:217.50px;height:16.21px;background:#ffffff;"><span>Franklin Tebit 12/10/2024</span></div><div class="c st mg" style="left:253.50px;top:537.52px;width:141.00px;height:16.21px;background:#cb07f8;"><span>Onboarding</span></div><div class="c ar cc" style="left:398.00px;top:537.52px;width:225.00px;height:16.21px;background:#ffffff;"></div><div class="c ar" style="left:623.00px;top:537.52px;width:340.00px;height:16.21px;background:#ffffff;"></div><div class="c ar" style="left:963.00px;top:537.52px;width:227.00px;height:16.21px;background:#ffffff;"></div><div class="rh" style="top:553.73px;height:16.21px;line-height:18.41px">662</div><div class="c nm" style="left:36.00px;top:553.73px;width:217.50px;height:16.21px;background:#ffffff;"></div><div class="c st mg" style="left:253.50px;top:553.73px;width:141.00px;height:16.21px;background:#cb07f8;"><span>Onboarding</span></div><div class="c ar cc" style="left:398.00px;top:553.73px;width:225.00px;height:16.21px;background:#ffffff;"></div><div class="c ar" style="left:623.00px;top:553.73px;width:340.00px;height:16.21px;background:#ffffff;"></div><div class="c ar" style="left:963.00px;top:553.73px;width:227.00px;height:16.21px;background:#ffffff;"></div><div class="rh" style="top:569.94px;height:16.21px;line-height:18.41px">663</div><div class="c nm" style="left:36.00px;top:569.94px;width:217.50px;height:16.21px;background:#ffffff;"><span>Olukayode Popoola 12/10/2024</span></div><div class="c st" style="left:253.50px;top:569.94px;width:141.00px;height:16.21px;background:#e5fc1b;"><span>04/16/2025</span></div><div class="c ar cc" style="left:398.00px;top:569.94px;width:225.00px;height:16.21px;background:#4d86e3;"><span>one -Eric</span></div><div class="c ar" style="left:623.00px;top:569.94px;width:340.00px;height:16.21px;background:#4d86e3;"><span>03.28 Update done-Eric</span></div><div class="c ar" style="left:963.00px;top:569.94px;width:227.00px;height:16.21px;background:#4d86e3;"><span>04.24 Update done -Eric</span></div><div class="rh" style="top:586.15px;height:16.21px;line-height:18.41px">664</div><div class="c nm" style="left:36.00px;top:586.15px;width:217.50px;height:16.21px;background:#ffffff;"><span>Charles Mixon 12/11/2024</span></div><div class="c st" style="left:253.50px;top:586.15px;width:141.00px;height:16.21px;background:#e7effd;"><span>Inactive</span></div><div class="c ar cc" style="left:398.00px;top:586.15px;width:225.00px;height:16.21px;background:#ffffff;"></div><div class="c ar" style="left:623.00px;top:586.15px;width:340.00px;height:16.21px;background:#ffffff;"></div><div class="c ar" style="left:963.00px;top:586.15px;width:227.00px;height:16.21px;background:#ffffff;"></div><div class="rh" style="top:602.36px;height:16.21px;line-height:18.41px">665</div><div class="c nm" style="left:36.00px;top:602.36px;width:217.50px;height:16.21px;background:#ffffff;"><span>Havien Bender 12/12/2024</span></div><div class="c st mg" style="left:253.50px;top:602.36px;width:141.00px;height:16.21px;background:#cb07f8;"><span>Onboarding</span></div><div class="c ar cc" style="left:398.00px;top:602.36px;width:225.00px;height:16.21px;background:#ffffff;"></div><div class="c ar" style="left:623.00px;top:602.36px;width:340.00px;height:16.21px;background:#ffffff;"></div><div class="c ar" style="left:963.00px;top:602.36px;width:227.00px;height:16.21px;background:#ffffff;"></div><div class="rh" style="top:618.57px;height:16.21px;line-height:18.41px">666</div><div class="c nm" style="left:36.00px;top:618.57px;width:217.50px;height:16.21px;background:#ffffff;"><span>Jamila Pierre 12/13/2024</span></div><div class="c st tp" style="left:253.50px;top:618.57px;width:141.00px;height:16.21px;background:#c39bc8;"><span>Needs to pay Report Identity</span></div><div class="c ar cc" style="left:398.00px;top:618.57px;width:225.00px;height:16.21px;background:#ffffff;"></div><div class="c ar" style="left:623.00px;top:618.57px;width:340.00px;height:16.21px;background:#ffffff;"></div><div class="c ar" style="left:963.00px;top:618.57px;width:227.00px;height:16.21px;background:#ffffff;"></div><div class="rh" style="top:634.78px;height:16.21px;line-height:18.41px">667</div><div class="c nm" style="left:36.00px;top:634.78px;width:217.50px;height:16.21px;background:#ffffff;"><span>Willie Bryant 12/13/2024</span></div><div class="c st" style="left:253.50px;top:634.78px;width:141.00px;height:16.21px;background:#e5fc1b;"><span>04/24/2025</span></div><div class="c ar cc" style="left:398.00px;top:634.78px;width:225.00px;height:16.21px;background:#4d86e3;"><span>- Rolly</span></div><div class="c ar" style="left:623.00px;top:634.78px;width:340.00px;height:16.21px;background:#4d86e3;"><span>02.27 Update done -Eric</span></div><div class="c ar" style="left:963.00px;top:634.78px;width:227.00px;height:16.21px;background:#4d86e3;"><span>03.27 Update done -Eric</span></div><div class="rh" style="top:650.99px;height:16.21px;line-height:18.41px">668</div><div class="c nm" style="left:36.00px;top:650.99px;width:217.50px;height:16.21px;background:#ffffff;"><span>Oluwaseun Erinle 12/13/2024</span></div><div class="c st" style="left:253.50px;top:650.99px;width:141.00px;height:16.21px;background:#e39426;"><span>OVERDUE</span></div><div class="c ar cc" style="left:398.00px;top:650.99px;width:225.00px;height:16.21px;background:#4d86e3;"><span>done -Eric</span></div><div class="c ar" style="left:623.00px;top:650.99px;width:340.00px;height:16.21px;background:#4d86e3;"><span>02.27 Credit update done -Anna</span></div><div class="c ar" style="left:963.00px;top:650.99px;width:227.00px;height:16.21px;background:#4d86e3;"><span>04.06 Update done-Eric</span></div><div class="rh" style="top:667.20px;height:16.21px;line-height:18.41px">669</div><div class="c nm" style="left:36.00px;top:667.20px;width:217.50px;height:16.21px;background:#ffffff;"><span>Chenise Hawkins 12/13/2024</span></div><div class="c st" style="left:253.50px;top:667.20px;width:141.00px;height:16.21px;background:#e5fc1b;"><span>05/07/2025</span></div><div class="c ar cc" style="left:398.00px;top:667.20px;width:225.00px;height:16.21px;background:#4d86e3;"><span>ne -Anna</span></div><div class="c ar" style="left:623.00px;top:667.20px;width:340.00px;height:16.21px;background:#4d86e3;"><span>3.08 Update done -Anna</span></div><div class="c ar" style="left:963.00px;top:667.20px;width:227.00px;height:16.21px;background:#4d86e3;"><span>04.06 Update done-Eric</span></div><div class="rh" style="top:683.41px;height:16.21px;line-height:18.41px">670</div><div class="c nm" style="left:36.00px;top:683.41px;width:217.50px;height:16.21px;background:#ffffff;"><span>Kanisha Abraham 12/14/2024</span></div><div class="c st" style="left:253.50px;top:683.41px;width:141.00px;height:16.21px;background:#e5fc1b;"><span>04/26/2025</span></div><div class="c ar cc" style="left:398.00px;top:683.41px;width:225.00px;height:16.21px;background:#4d86e3;"><span>one -Eric</span></div><div class="c ar" style="left:623.00px;top:683.41px;width:340.00px;height:16.21px;background:#4d86e3;"><span>02.26 Update done -Eric</span></div><div class="c ar" style="left:963.00px;top:683.41px;width:227.00px;height:16.21px;background:#4d86e3;"><span>04.06 Update done-Eric</span></div><div class="rh" style="top:699.62px;height:16.21px;line-height:18.41px">671</div><div class="c nm rd" style="left:36.00px;top:699.62px;width:217.50px;height:16.21px;background:#ea0000;"><span>Shoeib Shaik - Mohammed 12/14/2024</span></div><div class="c st rd" style="left:253.50px;top:699.62px;width:141.00px;height:16.21px;background:#d2001c;"><span>Pending Cancellation</span></div><div class="c ar rd cc" style="left:398.00px;top:699.62px;width:225.00px;height:16.21px;background:#ea0000;"></div><div class="c ar rd" style="left:623.00px;top:699.62px;width:340.00px;height:16.21px;background:#ea0000;"></div><div class="c ar rd" style="left:963.00px;top:699.62px;width:227.00px;height:16.21px;background:#ea0000;"></div><div class="rh" style="top:715.83px;height:16.21px;line-height:18.41px">672</div><div class="c nm rd" style="left:36.00px;top:715.83px;width:217.50px;height:16.21px;background:#ea0000;"><span>Fnu Touseef Mohammed Tayyab 12/14/2024</span></div><div class="c st rd" style="left:253.50px;top:715.83px;width:141.00px;height:16.21px;background:#d2001c;"><span>Cancellation</span></div><div class="c ar rd cc" style="left:398.00px;top:715.83px;width:225.00px;height:16.21px;background:#ea0000;"></div><div class="c ar rd" style="left:623.00px;top:715.83px;width:340.00px;height:16.21px;background:#ea0000;"></div><div class="c ar rd" style="left:963.00px;top:715.83px;width:227.00px;height:16.21px;background:#ea0000;"></div><div class="rh" style="top:732.04px;height:16.21px;line-height:18.41px">673</div><div class="c nm rd" style="left:36.00px;top:732.04px;width:217.50px;height:16.21px;background:#ea0000;"><span>Theresa Stevenson 12/15/2024</span></div><div class="c st rd" style="left:253.50px;top:732.04px;width:141.00px;height:16.21px;background:#d2001c;"><span>02/01/2025</span></div><div class="c ar rd cc" style="left:398.00px;top:732.04px;width:225.00px;height:16.21px;background:#ea0000;"><span>one -Eric</span></div><div class="c ar rd" style="left:623.00px;top:732.04px;width:340.00px;height:16.21px;background:#ea0000;"><span>02.24 Update done -Shiela</span></div><div class="c ar rd" style="left:963.00px;top:732.04px;width:227.00px;height:16.21px;background:#ea0000;"><span>06.08 Vm -Eric</span></div><div class="rh" style="top:748.25px;height:16.21px;line-height:18.41px">674</div><div class="c nm" style="left:36.00px;top:748.25px;width:217.50px;height:16.21px;background:#ffffff;"><span>Martin Ndjembelle 12/16/2024</span></div><div class="c st" style="left:253.50px;top:748.25px;width:141.00px;height:16.21px;background:#c39bc8;"><span>Needs to pay IDQ</span></div><div class="c ar cc" style="left:398.00px;top:748.25px;width:225.00px;height:16.21px;background:#4d86e3;"><span>one -Eric</span></div><div class="c ar" style="left:623.00px;top:748.25px;width:340.00px;height:16.21px;background:#4d86e3;"><span>02.27 Update done -Eric</span></div><div class="c ar" style="left:963.00px;top:748.25px;width:227.00px;height:16.21px;background:#4d86e3;"><span>04.27 march update -Eric</span></div><div class="rh" style="top:764.46px;height:16.21px;line-height:18.41px">675</div><div class="c nm rd" style="left:36.00px;top:764.46px;width:217.50px;height:16.21px;background:#ea0000;"><span>Christian Odueme 12/16/2024</span></div><div class="c st rd" style="left:253.50px;top:764.46px;width:141.00px;height:16.21px;background:#d2001c;"><span>Pending Cancellation</span></div><div class="c ar rd cc" style="left:398.00px;top:764.46px;width:225.00px;height:16.21px;background:#ea0000;"></div><div class="c ar rd" style="left:623.00px;top:764.46px;width:340.00px;height:16.21px;background:#ea0000;"></div><div class="c ar rd" style="left:963.00px;top:764.46px;width:227.00px;height:16.21px;background:#ea0000;"></div><div class="rh" style="top:780.67px;height:16.21px;line-height:18.41px">676</div><div class="c nm" style="left:36.00px;top:780.67px;width:217.50px;height:16.21px;background:#ffffff;"><span>Lorenzo Mccoy 12/16/2024</span></div><div class="c st" style="left:253.50px;top:780.67px;width:141.00px;height:16.21px;background:#e5fc1b;"><span>02/17/2025</span></div><div class="c ar cc" style="left:398.00px;top:780.67px;width:225.00px;height:16.21px;background:#4d86e3;"><span>one -Eric</span></div><div class="c ar" style="left:623.00px;top:780.67px;width:340.00px;height:16.21px;background:#4d86e3;"><span>04.02 Update done -Eric</span></div><div class="c ar" style="left:963.00px;top:780.67px;width:227.00px;height:16.21px;background:#4d86e3;"><span>04.23 Update done -Eric</span></div><div class="rh" style="top:796.88px;height:16.21px;line-height:18.41px">677</div><div class="c nm" style="left:36.00px;top:796.88px;width:217.50px;height:16.21px;background:#ffffff;letter-spacing:.2px"><span>WILLIAM UPCHURCH 12/17/2024</span></div><div class="c st" style="left:253.50px;top:796.88px;width:141.00px;height:16.21px;background:#e5fc1b;"></div><div class="c ar cc" style="left:398.00px;top:796.88px;width:225.00px;height:16.21px;background:#ffffff;"></div><div class="c ar" style="left:623.00px;top:796.88px;width:340.00px;height:16.21px;background:#ffffff;"></div><div class="c ar" style="left:963.00px;top:796.88px;width:227.00px;height:16.21px;background:#ffffff;"></div><div class="rh" style="top:813.09px;height:16.21px;line-height:18.41px">678</div><div class="c nm" style="left:36.00px;top:813.09px;width:217.50px;height:16.21px;background:#ffffff;"><span>Olaniyi Daramola 12/17/2024</span></div><div class="c st" style="left:253.50px;top:813.09px;width:141.00px;height:16.21px;background:#e5fc1b;"><span>04/26/2025</span></div><div class="c ar cc" style="left:398.00px;top:813.09px;width:225.00px;height:16.21px;background:#4d86e3;"><span>one -Eric</span></div><div class="c ar" style="left:623.00px;top:813.09px;width:340.00px;height:16.21px;background:#4d86e3;"><span>02.26 Update done -Eric</span></div><div class="c ar" style="left:963.00px;top:813.09px;width:227.00px;height:16.21px;background:#ffffff;"><span>05.27 no answer - val</span></div><div class="rh" style="top:829.30px;height:38.80px;line-height:41.00px">679</div><div class="c nm tall" style="left:36.00px;top:829.30px;width:217.50px;height:38.80px;background:#ffffff;"><span>Lashaver Brown 12/17/2024</span></div><div class="c st mid" style="left:253.50px;top:829.30px;width:141.00px;height:38.80px;background:#e5fc1b;"><span>05/15/2025</span></div><div class="c ar cc mid" style="left:398.00px;top:829.30px;width:225.00px;height:38.80px;background:#4d86e3;"><span>one -Eric</span></div><div class="c ar mid" style="left:623.00px;top:829.30px;width:340.00px;height:38.80px;background:#4d86e3;"><span>03.02 Update done -Eric</span></div><div class="c ar mid" style="left:963.00px;top:829.30px;width:227.00px;height:38.80px;background:#4d86e3;"><span>03.19 Update done -Eric</span></div><div class="rh" style="top:868.10px;height:16.21px;line-height:18.41px">680</div><div class="c nm" style="left:36.00px;top:868.10px;width:217.50px;height:16.21px;background:#ffffff;"><span>Khadija Mansaray 12/17/2024</span></div><div class="c st" style="left:253.50px;top:868.10px;width:141.00px;height:16.21px;background:#e5fc1b;"><span>04/05/2025</span></div><div class="c ar cc" style="left:398.00px;top:868.10px;width:225.00px;height:16.21px;background:#4d86e3;"><span>one -Eric</span></div><div class="c ar" style="left:623.00px;top:868.10px;width:340.00px;height:16.21px;background:#4d86e3;"><span>04.04 Update done -Eric</span></div><div class="c ar" style="left:963.00px;top:868.10px;width:227.00px;height:16.21px;background:#ffffff;"><span>04.15 Will sign up with IdentityiQ today -Eric</span></div><div class="rh" style="top:884.31px;height:16.21px;line-height:18.41px">681</div><div class="c nm" style="left:36.00px;top:884.31px;width:217.50px;height:16.21px;background:#ffffff;"><span>Tega Imonivwerha 12/17/2024</span></div><div class="c st" style="left:253.50px;top:884.31px;width:141.00px;height:16.21px;background:#e5fc1b;"><span>04/26/2025</span></div><div class="c ar cc" style="left:398.00px;top:884.31px;width:225.00px;height:16.21px;background:#4d86e3;"><span>one -Eric</span></div><div class="c ar" style="left:623.00px;top:884.31px;width:340.00px;height:16.21px;background:#4d86e3;"><span>02.26 Update done -Eric</span></div><div class="c ar" style="left:963.00px;top:884.31px;width:227.00px;height:16.21px;background:#4d86e3;"><span>03.27 Update done -Eric</span></div><div class="rh" style="top:900.52px;height:16.21px;line-height:18.41px">682</div><div class="c nm" style="left:36.00px;top:900.52px;width:217.50px;height:16.21px;background:#ffffff;"><span>Tara Riggins 12/17/2024</span></div><div class="c st" style="left:253.50px;top:900.52px;width:141.00px;height:16.21px;background:#c39bc8;"><span>Needs to pay IDQ</span></div><div class="c ar cc" style="left:398.00px;top:900.52px;width:225.00px;height:16.21px;background:#ffffff;"></div><div class="c ar" style="left:623.00px;top:900.52px;width:340.00px;height:16.21px;background:#ffffff;"><span>05.21 VM - Charisma</span></div><div class="c ar" style="left:963.00px;top:900.52px;width:227.00px;height:16.21px;background:#ffffff;"></div><div class="rh" style="top:916.73px;height:16.21px;line-height:18.41px">683</div><div class="c nm" style="left:36.00px;top:916.73px;width:217.50px;height:16.21px;background:#ffffff;"><span>Tracy Martin 12/18/2024</span></div><div class="c st mg" style="left:253.50px;top:916.73px;width:141.00px;height:16.21px;background:#cb07f8;"><span>Onboarding</span></div><div class="c ar cc" style="left:398.00px;top:916.73px;width:225.00px;height:16.21px;background:#ffffff;"></div><div class="c ar" style="left:623.00px;top:916.73px;width:340.00px;height:16.21px;background:#ffffff;"></div><div class="c ar" style="left:963.00px;top:916.73px;width:227.00px;height:16.21px;background:#ffffff;"></div><div class="rh" style="top:932.94px;height:38.80px;line-height:41.00px">684</div><div class="c nm tall" style="left:36.00px;top:932.94px;width:217.50px;height:38.80px;background:#ffffff;"><span>Otis Willis 12/18/2024</span></div><div class="c st mid" style="left:253.50px;top:932.94px;width:141.00px;height:38.80px;background:#e5fc1b;"><span>05/23/2025</span></div><div class="c ar cc mid" style="left:398.00px;top:932.94px;width:225.00px;height:38.80px;background:#4d86e3;"><span>one -Eric</span></div><div class="c ar mid" style="left:623.00px;top:932.94px;width:340.00px;height:38.80px;background:#4d86e3;"><span>02.26 Update done -Eric</span></div><div class="c ar mid" style="left:963.00px;top:932.94px;width:227.00px;height:38.80px;background:#4d86e3;"><span>03.27 Update done -Eric</span></div><div class="rh" style="top:971.74px;height:16.21px;line-height:18.41px">685</div><div class="c nm" style="left:36.00px;top:971.74px;width:217.50px;height:16.21px;background:#ffffff;"><span>Novlet Simmonette 12/18/2024</span></div><div class="c st rd" style="left:253.50px;top:971.74px;width:141.00px;height:16.21px;background:#d2001c;"><span>in pending cancellation</span></div><div class="c ar cc" style="left:398.00px;top:971.74px;width:225.00px;height:16.21px;background:#ffffff;"></div><div class="c ar" style="left:623.00px;top:971.74px;width:340.00px;height:16.21px;background:#ffffff;"></div><div class="c ar" style="left:963.00px;top:971.74px;width:227.00px;height:16.21px;background:#ffffff;"></div><div class="rh" style="top:987.95px;height:16.21px;line-height:18.41px">686</div><div class="c nm rd" style="left:36.00px;top:987.95px;width:217.50px;height:16.21px;background:#ea0000;"><span>Kayla Bowman 12/18/2024</span></div><div class="c st rd tp" style="left:253.50px;top:987.95px;width:141.00px;height:16.21px;background:#d2001c;"><span>Needs to pay Report Identity</span></div><div class="c ar rd cc" style="left:398.00px;top:987.95px;width:225.00px;height:16.21px;background:#ea0000;"></div><div class="c ar rd" style="left:623.00px;top:987.95px;width:340.00px;height:16.21px;background:#ea0000;"><span>03.20 VM- Kassandra</span></div><div class="c ar rd" style="left:963.00px;top:987.95px;width:227.00px;height:16.21px;background:#ea0000;"></div><div class="rh" style="top:1004.16px;height:16.21px;line-height:18.41px">687</div><div class="c nm rd" style="left:36.00px;top:1004.16px;width:217.50px;height:16.21px;background:#ea0000;"><span>Carl Clemons 12/18/2024</span></div><div class="c st rd tp" style="left:253.50px;top:1004.16px;width:141.00px;height:16.21px;background:#d2001c;"><span>Needs to pay Report Identity</span></div><div class="c ar rd cc" style="left:398.00px;top:1004.16px;width:225.00px;height:16.21px;background:#ea0000;"></div><div class="c ar rd" style="left:623.00px;top:1004.16px;width:340.00px;height:16.21px;background:#ea0000;"><span>03.20 VM- Kassandra</span></div><div class="c ar rd" style="left:963.00px;top:1004.16px;width:227.00px;height:16.21px;background:#ea0000;"></div><div class="rh" style="top:1020.37px;height:16.21px;line-height:18.41px">688</div><div class="c nm" style="left:36.00px;top:1020.37px;width:217.50px;height:16.21px;background:#ffffff;"><span>Chioma Okunade 12/18/2024</span></div><div class="c st" style="left:253.50px;top:1020.37px;width:141.00px;height:16.21px;background:#e5fc1b;"><span>04/27/2025</span></div><div class="c ar cc" style="left:398.00px;top:1020.37px;width:225.00px;height:16.21px;background:#4d86e3;"><span>one &nbsp;-Eric</span></div><div class="c ar" style="left:623.00px;top:1020.37px;width:340.00px;height:16.21px;background:#4d86e3;"><span>03.24 Update Done-Rolly</span></div><div class="c ar" style="left:963.00px;top:1020.37px;width:227.00px;height:16.21px;background:#4d86e3;"><span>05.22 Update Done - Charisma</span></div>
<!-- frozen area background -->
<div class="abs" style="left:0;top:216px;width:1200px;height:54.5px;background:#fff"></div>
<!-- corner -->
<div class="abs" style="left:0;top:216px;width:36px;height:20px;background:#f8f9fa;border-right:1px solid #cfcfcf;border-bottom:1px solid #cfcfcf"></div>
<div class="ch" style="left:36px;width:217.5px">A</div>
<div class="ch" style="left:253.5px;width:141px;background:#1557d0;color:#fff;font-weight:bold;border-color:#1557d0">B</div>
<div class="ch" style="left:398px;width:225px;padding-right:76px">C</div>
<div class="ch" style="left:623px;width:340px">D</div>
<div class="ch" style="left:963px;width:227px">E</div>
<div class="ch" style="left:1190px;width:10px;border-right:none;background:#f8f9fa"></div>
<div class="abs" style="left:0;top:216px;width:1200px;height:1px;background:#dcdee2"></div>
<!-- row 1 -->
<div class="rh" style="top:236px;height:18px;line-height:18px">1</div>
<div class="rh" style="top:254px;height:16.5px;line-height:16px">2</div>
<div class="c hd" style="left:36px;top:236px;width:217.5px;height:18px;background:#fff;border:none;font-family:'DejaVu Sans','Liberation Sans',sans-serif;font-size:14.8px;padding-left:7px"><span style="line-height:17px;position:relative;top:1px">Name</span></div>
<div class="c hd" style="left:253.5px;top:236px;width:141px;height:18px;background:#e7effd;border:none;font-size:14.6px;padding-left:3px"><span style="line-height:17px;position:relative;top:0.5px">Status</span></div>
<div class="c hd" style="left:398px;top:236px;width:225px;height:18px;background:#fff;border:none;border-right:1px solid #000;font-size:14.6px;padding-left:0"><span style="line-height:17px;position:relative;top:0.5px;margin-left:-3.2px">ne Coaching</span></div>
<div class="c hd" style="left:623px;top:236px;width:340px;height:18px;background:#fff;border:none;border-right:1px solid #000;font-size:14.85px;padding-left:3px"><span style="line-height:17px;position:relative;top:0.5px">Date: Round 1 monthly update</span></div>
<div class="c hd" style="left:963px;top:236px;width:227px;height:18px;background:#fff;border:none;border-right:1px solid #000;font-size:14.85px;padding-left:3px"><span style="line-height:17px;position:relative;top:0.5px">Date: Round 2 monthly update</span></div>
<!-- row 2 black -->
<div class="abs" style="left:36px;top:254px;width:217.5px;height:16.5px;background:#000"></div>
<div class="abs" style="left:253.5px;top:254px;width:141px;height:16.5px;background:#e7effd;border-bottom:1px solid #333"></div>
<div class="abs" style="left:398px;top:254px;width:792px;height:16.5px;background:#000"></div>
<!-- active cell border -->
<div class="abs" style="left:253px;top:236px;width:142px;height:18.5px;border:1.6px solid #2a6ad6"></div>
<!-- frozen row divider + shadow -->
<div class="abs" style="left:0;top:270px;width:1200px;height:3px;background:#c4c6c9"></div>
<div class="abs" style="left:0;top:273px;width:1200px;height:4px;background:linear-gradient(rgba(120,120,120,.35),rgba(120,120,120,0))"></div>
<!-- column B selection lines -->
<div class="abs" style="left:253px;top:216px;width:1px;height:821px;background:#3a73d8"></div>
<div class="abs" style="left:394px;top:216px;width:1px;height:821px;background:#3a73d8"></div>
<!-- frozen col divider -->
<div class="abs" style="left:395px;top:216px;width:3px;height:821px;background:#b4bac6"></div>
<!-- left edge of col C black line not visible; grid bottom -->
<div class="abs" style="left:0;top:1036.6px;width:1200px;height:14px;background:#fff"></div><div class="abs" style="left:0;top:1037.5px;width:394px;height:12.5px;background:#f3f4f6"></div>
<div class="abs" style="left:0;top:1037px;width:1190px;height:1px;background:#e0e0e0"></div>
<!-- h scrollbar -->
<div class="abs" style="left:398px;top:1039px;width:792px;height:10px;background:#f8f9fa"></div>
<div class="abs" style="left:411px;top:1040px;width:122px;height:8px;border-radius:4px;background:#dadce0"></div>
<!-- v scrollbar -->
<div class="abs" style="left:1190px;top:236px;width:10px;height:801px;background:#fff;border-left:1px solid #e4e4e4"></div>
<div class="abs" style="left:1191px;top:541px;width:8px;height:20px;border-radius:4px;background:#d5d7da"></div>

</div></div>
<div id="bbar"></div>
<svg style="left:43.5px;top:1060px" width="10.5" height="10.5" viewBox="0 0 10.500 10.5"><path d="M5.250 0V10.500M0 5.250H10.5" stroke="#444746" stroke-width="1.4"/></svg>
<svg style="left:75.5px;top:1060.5px" width="11" height="9" viewBox="0 0 11 9"><path d="M0 1H11M0 4.500H11M0 8H11" stroke="#444746" stroke-width="1.4"/></svg>
<div class="stab" style="left:117px;font-size:12.3px">appts&amp;sales</div>
<div class="car" style="left:194.3px;top:1064px"></div>
<div class="abs" style="left:211px;top:1050px;width:124.5px;height:28px;background:#e0e8f6"></div>
<div class="abs" style="left:221.5px;top:1058px;width:13.5px;height:13.5px;border-radius:4px;background:#fdfdfe;font-size:9.5px;line-height:14px;text-align:center;color:#333">1</div>
<div class="stab" style="left:241px;font-size:11.8px;font-weight:bold;color:#1b55c4">Gold Clients</div>
<div class="car" style="left:319.8px;top:1064px;border-top-color:#1b55c4"></div>
<div class="stab" style="left:345.5px;font-size:12.3px">Silver Clients</div>
<div class="car" style="left:426.8px;top:1064px"></div>
<div class="stab" style="left:454px;font-size:12.3px">Cancellations</div>
<div class="car" style="left:537.8px;top:1064px"></div>
<div class="stab" style="left:565px;font-size:12.3px">Monitoring Issues</div>
<div class="car" style="left:670.6px;top:1064px"></div>
<svg class="lock" style="left:699.5px;top:1058px" width="10" height="13" viewBox="0 0 10 13"><path d="M2.600 5.200V3.600A2.400 2.400 0 0 1 7.400 3.600V5.2" fill="none" stroke="#3c3f43" stroke-width="1.5"/><rect x=".3" y="5" width="9.4" height="7.7" rx="1.2" fill="#3c3f43"/></svg>
<div class="stab" style="left:714.5px;font-size:12.3px">Client Status</div>
<div class="car" style="left:794.3px;top:1064px"></div>
<svg class="lock" style="left:822.5px;top:1058px" width="10" height="13" viewBox="0 0 10 13"><path d="M2.600 5.200V3.600A2.400 2.400 0 0 1 7.400 3.600V5.2" fill="none" stroke="#3c3f43" stroke-width="1.5"/><rect x=".3" y="5" width="9.4" height="7.7" rx="1.2" fill="#3c3f43"/></svg>
<div class="stab" style="left:837.5px;font-size:12.6px">ready for dispute</div>
<div class="abs" style="left:939px;top:1055px;width:1px;height:18px;background:#cfd2d6"></div>
<svg style="left:954px;top:1060px" width="6" height="10" viewBox="0 0 6 10"><path d="M5 1L1.200 5L5 9" fill="none" stroke="#c2c5c9" stroke-width="1.4"/></svg>
<svg style="left:986px;top:1060px" width="6" height="10" viewBox="0 0 6 10"><path d="M1 1L4.800 5L1 9" fill="none" stroke="#3c3f43" stroke-width="1.5"/></svg>
<div class="abs" style="left:1074px;top:1053px;width:117px;height:22.5px;border-radius:6px;background:#c5eed1"></div>
<div class="abs" style="left:1083px;top:1057px;font-size:11.8px;line-height:14px;color:#0d4f25;white-space:nowrap">Min: 06/28/2024</div>
<div class="car" style="left:1175px;top:1063px;border-top-color:#0d4f25"></div>

<!-- scroll arrows -->
<div class="abs" style="left:1190.5px;top:1013px;width:9.5px;height:12px;background:#f5f6f7;border:1px solid #ebecee"></div>
<div class="abs" style="left:1190.5px;top:1025.5px;width:9.5px;height:12px;background:#f5f6f7;border:1px solid #ebecee"></div>
<div class="abs" style="left:1192.8px;top:1017.5px;width:0;height:0;border-left:2.5px solid transparent;border-right:2.5px solid transparent;border-bottom:3px solid #9aa0a6"></div>
<div class="abs" style="left:1192.8px;top:1030.5px;width:0;height:0;border-left:2.5px solid transparent;border-right:2.5px solid transparent;border-top:3px solid #9aa0a6"></div>
<div class="abs" style="left:1167.5px;top:1038.5px;width:12px;height:11px;background:#f5f6f7;border:1px solid #ebecee"></div>
<div class="abs" style="left:1180px;top:1038.5px;width:12px;height:11px;background:#f5f6f7;border:1px solid #ebecee"></div>
<div class="abs" style="left:1171.8px;top:1041.8px;width:0;height:0;border-top:2.5px solid transparent;border-bottom:2.5px solid transparent;border-right:3px solid #9aa0a6"></div>
<div class="abs" style="left:1184.8px;top:1041.8px;width:0;height:0;border-top:2.5px solid transparent;border-bottom:2.5px solid transparent;border-left:3px solid #9aa0a6"></div>

<div id="black"></div>
</body></html>
